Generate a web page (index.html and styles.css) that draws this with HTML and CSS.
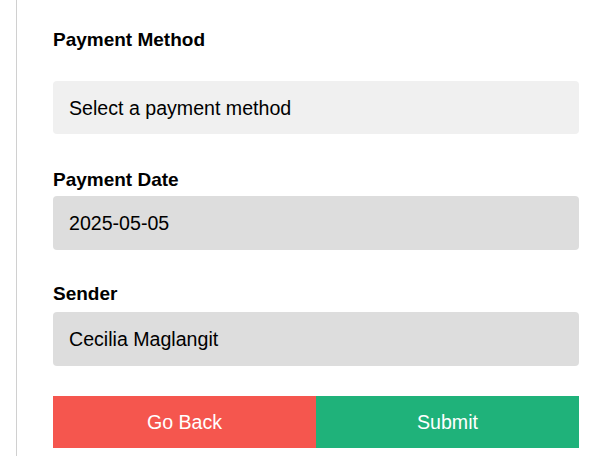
FILE: index.html
```html
<!DOCTYPE html>
<html lang="en">
<head>
  <meta charset="UTF-8">
  <meta name="viewport" content="width=device-width, initial-scale=1.0">
  <title>Payment Details</title>
  <link rel="stylesheet" href="styles.css">
</head>
<body>
  <div class="payment-panel">
    <form id="paymentForm">
      <div class="field field-method">
        <label for="method">Payment Method</label>
        <select id="method" name="method" class="select-box">
          <option value="">Select a payment method</option>
        </select>
      </div>
      <div class="field">
        <label for="date">Payment Date</label>
        <input type="text" id="date" name="date" value="2025-05-05" readonly>
      </div>
      <div class="field">
        <label for="sender">Sender</label>
        <input type="text" id="sender" name="sender" value="Cecilia Maglangit" readonly>
      </div>
      <div class="actions">
        <button type="button" class="btn-back">Go Back</button>
        <button type="submit" class="btn-submit">Submit</button>
      </div>
    </form>
  </div>
</body>
</html>
```

FILE: styles.css
```css
body { margin: 0; font-family: "Liberation Sans", Arial, sans-serif; background: #fff; color: #000; }
.payment-panel { margin-left: 16px; border-left: 1px solid #d0d0d0; padding: 29px 33px 8px 36px; min-height: 419px; }
.field { display: flex; flex-direction: column; margin-bottom: 35px; }
.field:nth-child(2) { margin-bottom: 33px; }
label { font-size: 19px; font-weight: bold; line-height: 21px; margin-bottom: 6px; }
.field-method label { margin-bottom: 31px; }
.field:nth-child(3) label { margin-bottom: 8px; }
.select-box, input[type="text"] { height: 54px; box-sizing: border-box; padding: 0 16px; border: none; border-radius: 4px; font-family: inherit; font-size: 19.6px; color: #000; outline: none; }
.select-box { height: 53px; background: #f0f0f0; appearance: none; -webkit-appearance: none; }
input[type="text"] { background: #dddddd; }
.actions { display: flex; margin-top: -5px; }
.actions button { flex: 1; height: 52px; border: none; font-family: inherit; font-size: 19.6px; color: #fff; cursor: pointer; }
.btn-back { background: #f5564e; }
.btn-submit { background: #1fb27a; }
```
